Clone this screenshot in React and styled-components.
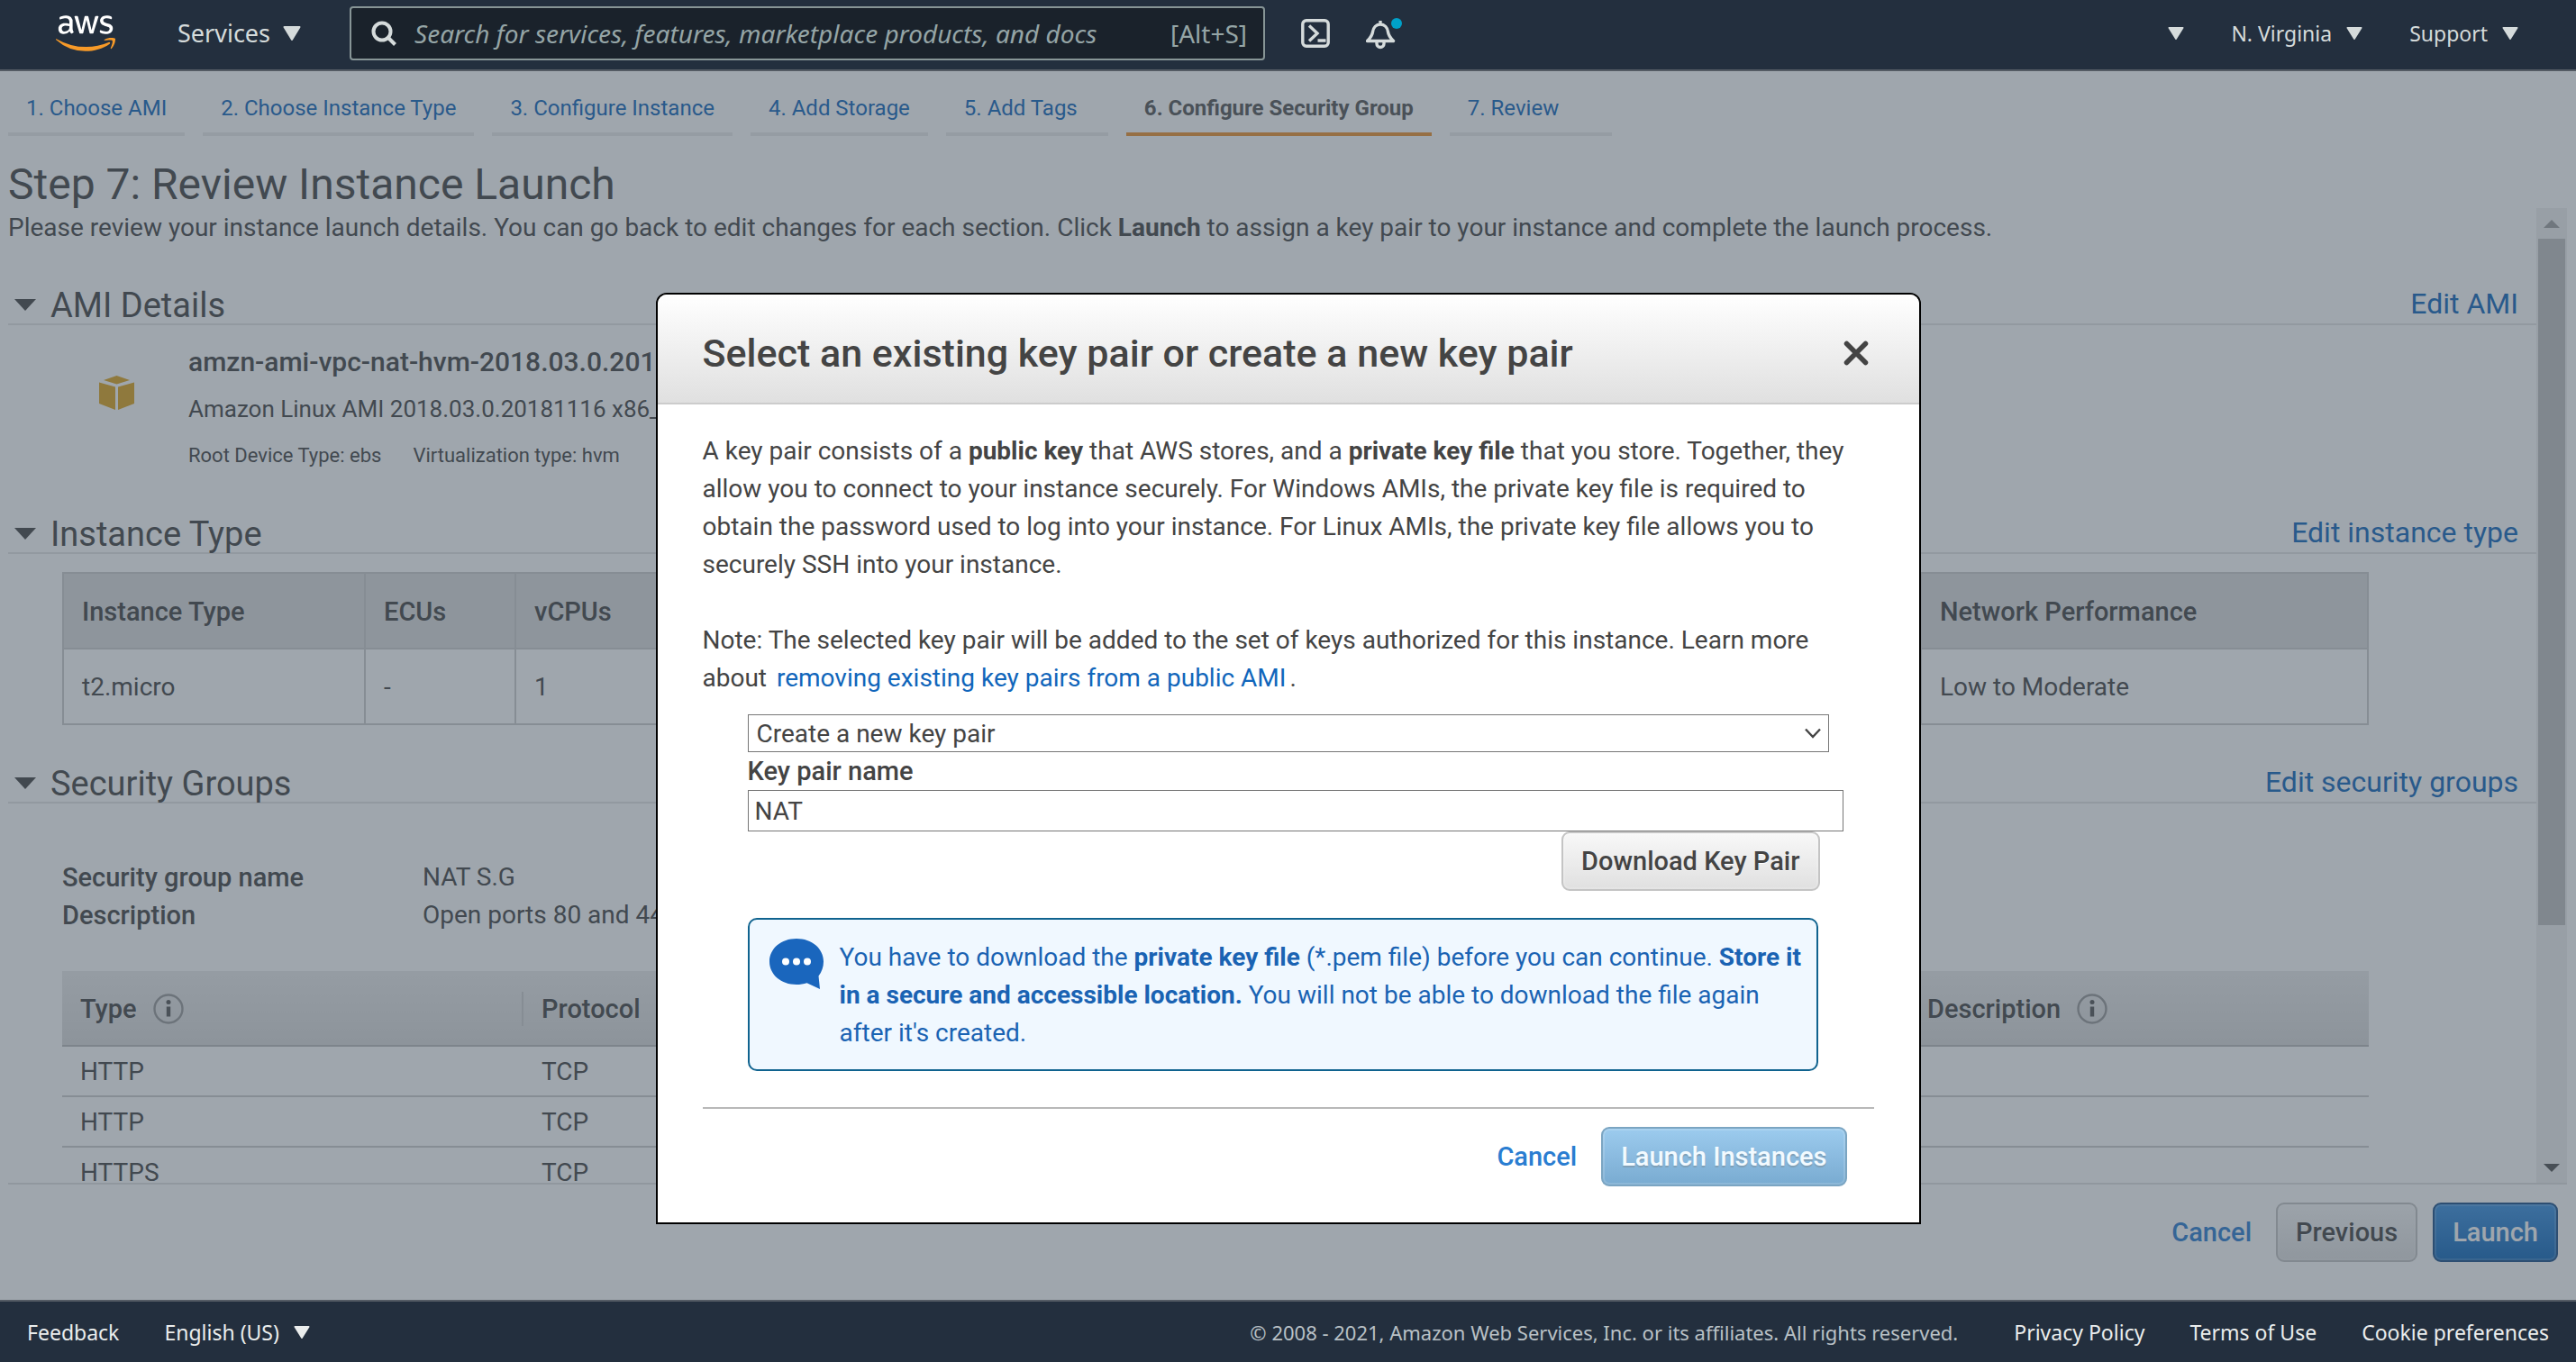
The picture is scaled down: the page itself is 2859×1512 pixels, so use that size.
import React, { useState } from "react";
import styled, { createGlobalStyle } from "styled-components";
import { FaAws } from "react-icons/fa";

const GlobalStyle = createGlobalStyle`
  *, *::before, *::after { box-sizing: border-box; }
  body { margin: 0; }
  h1, h2, p, dl, dd { margin: 0; }
  a { color: inherit; text-decoration: none; }
  button, input, select { font: inherit; }
`;

const ui = `Roboto, "Liberation Sans", sans-serif`;
const chrome = `"Noto Sans", "Open Sans", sans-serif`;
const emphasis = `
  font-size: 29px;
  font-weight: 500;
`;

const Page = styled.div`
  display: flex;
  flex-direction: column;
  height: 100vh;
  overflow: hidden;
  background: #fff;
  color: #444;
  font: 400 28px/42px ${ui};
`;

const TopBar = styled.header`
  display: flex;
  align-items: center;
  height: 79px;
  flex: none;
  padding: 0 64px 4px 62px;
  border-bottom: 2px solid #545b64;
  background: #232f3e;
  color: #d5dbdb;
  font: 400 27px/36px ${chrome};
`;

const Logo = styled.a`
  display: flex;
  width: 66px;
  margin-right: 69px;

  svg {
    width: 66px;
    height: 54px;
    overflow: visible;
  }
`;

const NavButton = styled.button`
  display: flex;
  align-items: center;
  gap: ${(p) => (p.$small ? "16px" : "14px")};
  padding: 0;
  border: 0;
  background: none;
  color: inherit;
  font-size: ${(p) => (p.$small ? "23px" : "27px")};
`;

const Triangle = styled.svg`
  width: ${(p) => p.$size || 20}px;
  height: ${(p) => (p.$size || 20) - 4}px;
  flex: none;
`;

const SearchBox = styled.label`
  display: flex;
  align-items: center;
  width: 1016px;
  height: 60px;
  margin: 0 40px 0 54px;
  padding: 0 18px 0 22px;
  gap: 20px;
  border: 2px solid #879596;
  border-radius: 4px;
  background: #1a222b;
  color: #95a5a6;
  font-size: 28px;
`;

const SearchInput = styled.input`
  flex: 1;
  min-width: 0;
  padding: 0;
  border: 0;
  outline: 0;
  background: none;
  color: inherit;

  &::placeholder {
    color: #95a5a6;
    font-style: italic;
    opacity: 1;
  }
`;

const IconButton = styled.button`
  display: flex;
  padding: 0;
  margin-right: 40px;
  border: 0;
  background: none;
`;

const TopRight = styled.div`
  display: flex;
  gap: 52px;
  margin-left: auto;
`;

const Main = styled.main`
  position: relative;
  display: flex;
  flex-direction: column;
  flex: 1;
  min-height: 0;
  padding: 23px 10px 42px 9px;
`;

const Steps = styled.nav`
  display: flex;
  gap: 20px;
  margin-bottom: 26px;
`;

const Step = styled.a`
  min-width: 180px;
  padding: 0 20px 9px;
  border-bottom: 4px solid ${(p) => (p.$current ? "#ec912d" : "#eaeaea")};
  color: ${(p) => (p.$current ? "#555" : "#1166bb")};
  font-size: 24px;
  font-weight: ${(p) => (p.$current ? 700 : 400)};
  line-height: 36px;
`;

const Title = styled.h1`
  padding-top: 2px;
  font-size: 48px;
  font-weight: 400;
  line-height: 52px;
`;

const ScrollFrame = styled.div`
  display: flex;
  flex: 1;
  min-height: 0;
  border-bottom: 2px solid #e0e0e0;
`;

const ScrollContent = styled.div`
  flex: 1;
  min-width: 0;
  overflow: hidden;
`;

const Intro = styled.p`
  padding-top: 1px;

  strong {
    font-weight: 700;
  }
`;

const ScrollTrack = styled.div`
  display: flex;
  flex-direction: column;
  align-items: center;
  width: 34px;
  background: #f1f1f1;
`;

const ScrollThumb = styled.div`
  width: 30px;
  height: 762px;
  background: #c1c1c1;
`;

const ScrollArrow = styled.button`
  display: flex;
  align-items: center;
  justify-content: center;
  height: 34px;
  padding: 0;
  margin-top: ${(p) => (p.$end ? "auto" : 0)};
  border: 0;
  background: none;
`;

const SectionHead = styled.div`
  display: flex;
  align-items: center;
  height: 44px;
  margin-top: 43px;
  padding: 0 20px 0 7px;
  border-bottom: 2px solid #e4e4e4;

  h2 {
    margin: 0 auto 0 16px;
    padding-top: 2px;
    font-size: 38px;
    font-weight: 400;
    line-height: 40px;
  }

  a {
    padding-bottom: 2px;
    color: #1166bb;
    font-size: 32px;
    line-height: 40px;
  }
`;

const AmiBody = styled.div`
  display: flex;
  padding: 20px 0 0 101px;
`;

const AmiInfo = styled.div`
  display: flex;
  flex-direction: column;
  gap: 10px;
  height: 147px;
  margin-left: 60px;
  white-space: nowrap;
`;

const AmiName = styled.strong`
  font-size: 30px;
  font-weight: 500;
`;

const AmiText = styled.span`
  font-size: 26px;
`;

const AmiMeta = styled.div`
  display: flex;
  gap: 35px;
  font-size: 22px;
`;

const AmiIcon = styled.svg`
  width: 39px;
  height: 38px;
  margin-top: 36px;
`;

const Inset = styled.div`
  padding: 0 186px 0 60px;
`;

const TypeTable = styled.table`
  width: 100%;
  margin-top: 20px;
  border-collapse: collapse;
  table-layout: fixed;
  text-align: left;

  th, td {
    height: 84px;
    padding: 2px 20px 0;
    border: 2px solid #ccc;
  }

  th {
    background: #ddd;
    ${emphasis}
  }
`;

const Details = styled.dl`
  display: grid;
  grid-template-columns: 400px 1fr;
  margin-top: 61px;

  dt {
    ${emphasis}
  }
`;

const RuleTable = styled.table`
  width: 100%;
  margin-top: 41px;
  border-collapse: separate;
  border-spacing: 0;
  table-layout: fixed;
  text-align: left;

  th {
    height: 84px;
    padding: 2px 0 0;
    border-bottom: 2px solid #bbb;
    background: linear-gradient(#ebebeb, #dadada);
    ${emphasis}
  }

  td {
    height: 56px;
    padding: 2px 20px 0;
    border-bottom: 2px solid #ccc;
  }
`;

const RuleHead = styled.div`
  display: flex;
  align-items: center;
  gap: 18px;
  height: 38px;
  padding-left: 20px;
  border-right: ${(p) => (p.$divider ? "2px solid #ccc" : "0")};
`;

const Actions = styled.div`
  display: flex;
  align-items: center;
  justify-content: flex-end;
  padding: 20px 10px 0 0;
`;

const TextButton = styled.button`
  padding: 0;
  margin-right: 27px;
  border: 0;
  background: none;
  color: #2a7dd1;
  ${emphasis}
`;

const skins = {
  plain: `
    border-color: #c4c4c4;
    background: linear-gradient(#f8f8f8, #e0e0e0);
    color: #444;
    text-shadow: 0 1px 0 #fff;
  `,
  primary: `
    border-color: #1a4f88;
    background: linear-gradient(#3a90e0, #0f66b8);
    color: #fff;
  `,
  faded: `
    border-color: #7ba5c2;
    background: linear-gradient(#9ccbee, #79abd1);
    color: #f2faff;
    text-shadow: 0 2px 1px #7f9fb6;
  `,
};

const Button = styled.button`
  height: 66px;
  padding: 0 20px;
  border: 2px solid;
  border-radius: 9px;
  box-shadow: inset 0 0 0 2px rgba(255, 255, 255, 0.15);
  ${emphasis}
  ${(p) => skins[p.$skin]}
`;

const ActionGap = styled.span`
  width: 17px;
`;

const Backdrop = styled.div`
  position: absolute;
  inset: 0;
  display: flex;
  align-items: flex-start;
  justify-content: center;
  padding-top: 246px;
  background: rgba(63, 77, 91, 0.5);
`;

const Dialog = styled.section`
  width: 1404px;
  max-width: 100%;
  border: 2px solid #000;
  border-radius: 12px 12px 0 0;
  overflow: hidden;
  background: #fff;
`;

const DialogHead = styled.div`
  display: flex;
  align-items: center;
  justify-content: space-between;
  height: 122px;
  padding: 10px 56px 0 50px;
  border-bottom: 2px solid #ccc;
  background: linear-gradient(#fff, #e0e0e0);

  h2 {
    font-size: 43px;
    font-weight: 500;
  }
`;

const CloseButton = styled.button`
  display: flex;
  padding: 0;
  border: 0;
  background: none;
`;

const DialogBody = styled.div`
  padding: 31px 50px 40px;

  strong {
    font-weight: 700;
  }
`;

const Paragraph = styled.p`
  margin-bottom: ${(p) => (p.$last ? "19px" : "42px")};

  a {
    margin: 0 4px;
    color: #1166bb;
  }
`;

const Form = styled.div`
  display: flex;
  flex-direction: column;
  padding: 0 34px 0 50px;
`;

const SelectWrap = styled.div`
  position: relative;
  height: 42px;
  margin-right: 16px;

  select {
    width: 100%;
    height: 42px;
    padding: 0 9px;
    border: 1px solid #767676;
    border-radius: 0;
    background: #fff;
    color: #444;
    appearance: none;
  }

  svg {
    position: absolute;
    top: 15px;
    right: 9px;
    width: 18px;
    height: 12px;
    pointer-events: none;
  }
`;

const FieldLabel = styled.label`
  ${emphasis}
`;

const NameInput = styled.input`
  width: 100%;
  height: 46px;
  padding: 0 7px;
  border: 1px solid #767676;
  background: #fff;
  color: #444;
`;

const DownloadRow = styled.div`
  display: flex;
  justify-content: flex-end;
  padding-right: 26px;
`;

const Notice = styled.div`
  display: flex;
  gap: 18px;
  margin: 30px 28px 0 0;
  padding: 21px 0 19px 22px;
  border: 2px solid #10638f;
  border-radius: 10px;
  background: #f0f8ff;
  color: #1a63b3;

  svg {
    width: 60px;
    height: 56px;
    flex: none;
  }
`;

const DialogActions = styled.div`
  display: flex;
  justify-content: flex-end;
  margin-top: 40px;
  padding: 20px 30px 0 0;
  border-top: 2px solid #b8b8b8;
`;

const Footer = styled.footer`
  display: flex;
  align-items: center;
  flex: none;
  height: 69px;
  padding: 0 30px;
  border-top: 2px solid #545b64;
  background: #232f3e;
  color: #eaeded;
  font: 400 23px/36px ${chrome};
`;

const FooterLeft = styled.div`
  display: flex;
  gap: 50px;
  margin-right: auto;
`;

const FooterRight = styled.div`
  display: flex;
  gap: 50px;
`;

const Copyright = styled.span`
  margin-right: 12px;
  color: #b9c1c6;
  font-size: 22px;
`;

function Caret({ size, color = "#d5dbdb" }) {
  return (
    <Triangle $size={size} viewBox="0 0 20 16" preserveAspectRatio="none" aria-hidden="true">
      <path d="M1.5 1h17L10 15z" fill={color} stroke={color} strokeWidth="2" strokeLinejoin="round" />
    </Triangle>
  );
}

function Twisty() {
  return (
    <svg width="24" height="13" viewBox="0 0 24 13" aria-hidden="true">
      <path d="M0 0h24L12 13z" fill="#444" />
    </svg>
  );
}

function InfoIcon() {
  return (
    <svg width="34" height="34" viewBox="0 0 34 34" aria-hidden="true">
      <circle cx="17" cy="17" r="15.5" fill="none" stroke="#999" strokeWidth="2.4" />
      <path d="M17 14.5v11" stroke="#555" strokeWidth="4.4" />
      <circle cx="17" cy="9.5" r="2.5" fill="#555" />
    </svg>
  );
}

function Section({ title, link }) {
  return (
    <SectionHead>
      <Twisty />
      <h2>{title}</h2>
      <a href="#edit">{link}</a>
    </SectionHead>
  );
}

const steps = [
  "1. Choose AMI",
  "2. Choose Instance Type",
  "3. Configure Instance",
  "4. Add Storage",
  "5. Add Tags",
  "6. Configure Security Group",
  "7. Review",
];

const rules = ["HTTP", "HTTP", "HTTPS"];

export default function App() {
  const [name, setName] = useState("NAT");

  return (
    <Page>
      <GlobalStyle />
      <TopBar>
        <Logo href="#home" aria-label="AWS home">
          <svg width="0" height="0" style={{ position: "absolute", width: 0, height: 0 }} aria-hidden="true">
            <linearGradient id="aws-fill" gradientUnits="userSpaceOnUse" x1="0" y1="0" x2="0" y2="512">
              <stop offset="0.58" stopColor="#fff" />
              <stop offset="0.58" stopColor="#f79a28" />
            </linearGradient>
          </svg>
          <FaAws fill="url(#aws-fill)" />
        </Logo>
        <NavButton type="button">
          Services <Caret />
        </NavButton>
        <SearchBox>
          <svg width="28" height="28" viewBox="0 0 28 28" fill="none" stroke="#d5dbdb" strokeWidth="4" aria-hidden="true">
            <circle cx="12" cy="12" r="9.5" />
            <path d="M18.5 18.5l8 8" />
          </svg>
          <SearchInput
            aria-label="Search"
            placeholder="Search for services, features, marketplace products, and docs"
          />
          <span>[Alt+S]</span>
        </SearchBox>
        <IconButton type="button" aria-label="CloudShell">
          <svg width="32" height="32" viewBox="0 0 32 32" fill="none" stroke="#d5dbdb" strokeWidth="3.4" aria-hidden="true">
            <rect x="1.8" y="1.8" width="28.4" height="28.4" rx="4" />
            <path d="M9 7.5l9 8.5-9 8.5M18.5 24h9" />
          </svg>
        </IconButton>
        <IconButton type="button" aria-label="Notifications">
          <svg width="42" height="38" viewBox="0 0 42 38" fill="none" stroke="#d5dbdb" strokeWidth="3.4" aria-hidden="true">
            <path d="M16 5v4M1.500 27.500c4-4 5.500-6 6-10 .6-5 4-8.500 8.500-8.500s7.900 3.500 8.500 8.500c.5 4 2 6 6 10z" strokeLinejoin="round" />
            <path d="M12 28v2.500a4 4 0 0 0 8 0V28" />
            <circle cx="34" cy="8" r="6" fill="#00a1c9" stroke="none" />
          </svg>
        </IconButton>
        <TopRight>
          <NavButton type="button" $small aria-label="Account">
            <Caret size={18} />
          </NavButton>
          <NavButton type="button" $small>
            N. Virginia <Caret size={18} />
          </NavButton>
          <NavButton type="button" $small>
            Support <Caret size={18} />
          </NavButton>
        </TopRight>
      </TopBar>

      <Main>
        <Steps>
          {steps.map((s, i) => (
            <Step key={s} href="#step" $current={i === 5}>
              {s}
            </Step>
          ))}
        </Steps>
        <Title>Step 7: Review Instance Launch</Title>
        <ScrollFrame>
          <ScrollContent>
            <Intro>
              Please review your instance launch details. You can go back to edit changes for each section. Click{" "}
              <strong>Launch</strong> to assign a key pair to your instance and complete the launch process.
            </Intro>

            <Section title="AMI Details" link="Edit AMI" />
            <AmiBody>
              <AmiIcon viewBox="0 0 39 38" aria-hidden="true">
                <g fill="#dfa51f">
                  <path d="M5 5L19.500 0 34 5 19.500 9.500z" />
                  <path d="M0 7.500l18 5V38L0 31z" />
                  <path d="M39 7.500l-18 5V38l18-7z" />
                </g>
              </AmiIcon>
              <AmiInfo>
                <AmiName>amzn-ami-vpc-nat-hvm-2018.03.0.20181116-x86_64-ebs</AmiName>
                <AmiText>Amazon Linux AMI 2018.03.0.20181116 x86_64 VPC HVM ebs</AmiText>
                <AmiMeta>
                  <span>Root Device Type: ebs</span>
                  <span>Virtualization type: hvm</span>
                </AmiMeta>
              </AmiInfo>
            </AmiBody>

            <Section title="Instance Type" link="Edit instance type" />
            <Inset>
              <TypeTable>
                <colgroup>
                  <col style={{ width: 335 }} />
                  <col style={{ width: 167 }} />
                  <col />
                  <col style={{ width: 496 }} />
                </colgroup>
                <thead>
                  <tr>
                    <th>Instance Type</th>
                    <th>ECUs</th>
                    <th>vCPUs</th>
                    <th>Network Performance</th>
                  </tr>
                </thead>
                <tbody>
                  <tr>
                    <td>t2.micro</td>
                    <td>-</td>
                    <td>1</td>
                    <td>Low to Moderate</td>
                  </tr>
                </tbody>
              </TypeTable>
            </Inset>

            <Section title="Security Groups" link="Edit security groups" />
            <Inset>
              <Details>
                <dt>Security group name</dt>
                <dd>NAT S.G</dd>
                <dt>Description</dt>
                <dd>Open ports 80 and 443</dd>
              </Details>
              <RuleTable>
                <colgroup>
                  <col style={{ width: 512 }} />
                  <col />
                  <col style={{ width: 510 }} />
                </colgroup>
                <thead>
                  <tr>
                    <th>
                      <RuleHead $divider>
                        Type <InfoIcon />
                      </RuleHead>
                    </th>
                    <th>
                      <RuleHead $divider>Protocol</RuleHead>
                    </th>
                    <th>
                      <RuleHead>
                        Description <InfoIcon />
                      </RuleHead>
                    </th>
                  </tr>
                </thead>
                <tbody>
                  {rules.map((r, i) => (
                    <tr key={i}>
                      <td>{r}</td>
                      <td>TCP</td>
                      <td />
                    </tr>
                  ))}
                </tbody>
              </RuleTable>
            </Inset>
          </ScrollContent>
          <ScrollTrack>
            <ScrollArrow type="button" aria-label="Scroll up">
              <svg width="18" height="9" viewBox="0 0 18 9"><path d="M0 9h18L9 0z" fill="#a0a0a0" /></svg>
            </ScrollArrow>
            <ScrollThumb />
            <ScrollArrow type="button" aria-label="Scroll down" $end>
              <svg width="18" height="9" viewBox="0 0 18 9"><path d="M0 0h18L9 9z" fill="#505050" /></svg>
            </ScrollArrow>
          </ScrollTrack>
        </ScrollFrame>
        <Actions>
          <TextButton type="button">Cancel</TextButton>
          <Button type="button" $skin="plain">Previous</Button>
          <ActionGap />
          <Button type="button" $skin="primary">Launch</Button>
        </Actions>

        <Backdrop>
          <Dialog role="dialog" aria-labelledby="dialog-title">
            <DialogHead>
              <h2 id="dialog-title">Select an existing key pair or create a new key pair</h2>
              <CloseButton type="button" aria-label="Close">
                <svg width="28" height="28" viewBox="0 0 28 28" stroke="#444" strokeWidth="5.500" strokeLinecap="round">
                  <path d="M3.500 3.500l21 21M24.500 3.500l-21 21" />
                </svg>
              </CloseButton>
            </DialogHead>
            <DialogBody>
              <Paragraph>
                A key pair consists of a <strong>public key</strong> that AWS stores, and a{" "}
                <strong>private key file</strong> that you store. Together, they allow you to connect to your instance
                securely. For Windows AMIs, the private key file is required to obtain the password used to log into
                your instance. For Linux AMIs, the private key file allows you to securely SSH into your instance.
              </Paragraph>
              <Paragraph $last>
                Note: The selected key pair will be added to the set of keys authorized for this instance. Learn more
                about <a href="#docs">removing existing key pairs from a public AMI</a>.
              </Paragraph>
              <Form>
                <SelectWrap>
                  <select aria-label="Key pair option" defaultValue="create">
                    <option value="create">Create a new key pair</option>
                  </select>
                  <svg viewBox="0 0 18 12" fill="none" stroke="#444" strokeWidth="2.400" aria-hidden="true">
                    <path d="M1 1.500l8 8.500 8-8.500" />
                  </svg>
                </SelectWrap>
                <FieldLabel htmlFor="key-name">Key pair name</FieldLabel>
                <NameInput id="key-name" value={name} onChange={(e) => setName(e.target.value)} />
                <DownloadRow>
                  <Button type="button" $skin="plain">Download Key Pair</Button>
                </DownloadRow>
                <Notice>
                  <svg viewBox="0 0 60 56" aria-hidden="true">
                    <path d="M30 0C13 0 0 11 0 25.500S13 51 30 51c4 0 8-.6 11.500-1.800L56 56l-1.500-14.500C58 37 60 31.500 60 25.500 60 11 47 0 30 0z" fill="#1a66bd" />
                    <g fill="#fff">
                      <circle cx="18" cy="25.500" r="4" />
                      <circle cx="30" cy="25.500" r="4" />
                      <circle cx="42" cy="25.500" r="4" />
                    </g>
                  </svg>
                  <p>
                    You have to download the <strong>private key file</strong> (*.pem file) before you can continue.{" "}
                    <strong>Store it in a secure and accessible location.</strong> You will not be able to download
                    the file again after it's created.
                  </p>
                </Notice>
              </Form>
              <DialogActions>
                <TextButton type="button">Cancel</TextButton>
                <Button type="button" $skin="faded">Launch Instances</Button>
              </DialogActions>
            </DialogBody>
          </Dialog>
        </Backdrop>
      </Main>

      <Footer>
        <FooterLeft>
          <a href="#feedback">Feedback</a>
          <NavButton type="button" $small>
            English (US) <Caret size={18} color="#eaeded" />
          </NavButton>
        </FooterLeft>
        <FooterRight>
          <Copyright>© 2008 - 2021, Amazon Web Services, Inc. or its affiliates. All rights reserved.</Copyright>
          <a href="#privacy">Privacy Policy</a>
          <a href="#terms">Terms of Use</a>
          <a href="#cookies">Cookie preferences</a>
        </FooterRight>
      </Footer>
    </Page>
  );
}
